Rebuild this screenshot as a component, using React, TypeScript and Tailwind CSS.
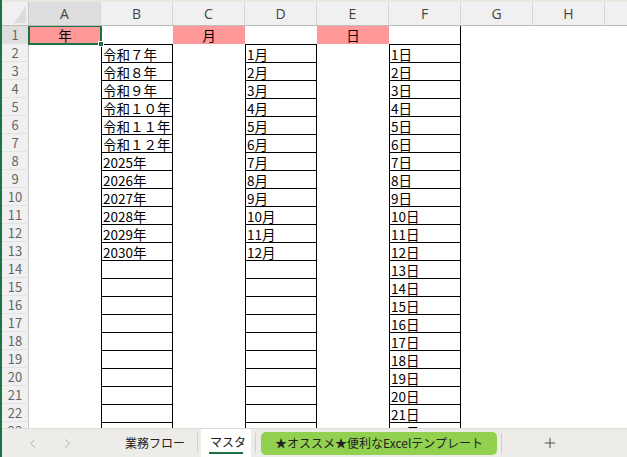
import React from "react";
import { ChevronLeft, ChevronRight, Plus } from "lucide-react";

const years = [
  "令和７年",
  "令和８年",
  "令和９年",
  "令和１０年",
  "令和１１年",
  "令和１２年",
  "2025年",
  "2026年",
  "2027年",
  "2028年",
  "2029年",
  "2030年",
];

const cols = ["A", "B", "C", "D", "E", "F", "G", "H"];
const rows = Array.from({ length: 23 }, (_, i) => i + 1);

const Boxed = ({ text }: { text?: string }) => (
  <div className="w-[72px] shrink-0 h-full border-x border-t border-black flex items-center pl-[1px] leading-[16px] text-black whitespace-nowrap overflow-hidden">
    {text}
  </div>
);

const Empty = () => <div className="w-[72px] shrink-0 h-full" />;

const Header = ({ label, selected }: { label: string; selected?: boolean }) => (
  <div className="w-[72px] shrink-0 h-full relative bg-[#ff9999] flex items-center justify-center leading-[16px] text-black">
    {label}
    {selected && (
      <>
        <div className="absolute -left-px -top-px -right-px -bottom-px border-2 border-[#1e7145]" />
        <div className="absolute -right-[3px] -bottom-[3px] w-[6px] h-[6px] bg-[#1e7145] border border-white z-10" />
      </>
    )}
  </div>
);

const Row = ({ r }: { r: number }) => {
  const year = years[r - 2];
  const month = r >= 2 && r <= 13 ? `${r - 1}月` : undefined;
  return (
    <div className="flex h-[18px] shrink-0">
      <div
        className={`w-[27px] shrink-0 h-full border-r border-b border-r-[#c8c8c8] border-b-[#e2e2e2] flex items-center justify-center leading-[16px] text-[13px] text-[#666] ${
          r === 1 ? "bg-[#dedede]" : "bg-[#f0f0f0]"
        }`}
      >
        {r}
      </div>
      {r === 1 ? (
        <>
          <Header label="年" selected />
          <Empty />
          <Header label="月" />
          <Empty />
          <Header label="日" />
          <div className="w-[72px] shrink-0 h-full border-r border-black" />
        </>
      ) : (
        <>
          <Empty />
          <Boxed text={year} />
          <Empty />
          <Boxed text={month} />
          <Empty />
          <Boxed text={`${r - 1}日`} />
        </>
      )}
    </div>
  );
};

export default function App() {
  return (
    <div className="w-[627px] h-[457px] flex flex-col bg-white border-l-2 border-[#1e7145] overflow-hidden font-['Noto_Sans_CJK_JP',sans-serif] text-[13.5px]">
      {/* top strip */}
      <div className="h-[2px] shrink-0 bg-[#ebe6df]" />

      {/* column headers */}
      <div className="flex h-[24px] shrink-0 bg-[#f0f0f0] border-b border-[#bdbdbd] text-[14px] text-[#444] font-['Open_Sans',sans-serif]">
        <div className="w-[27px] shrink-0 h-full border-r border-[#c8c8c8] flex items-end justify-end pr-[2px] pb-[2px]">
          <svg width="12" height="17" viewBox="0 0 12 17">
            <polygon points="12,0 12,17 0,17" fill="#dcdcdc" />
          </svg>
        </div>
        {cols.map((c) => (
          <div
            key={c}
            className={`w-[72px] shrink-0 h-full border-r border-[#d6d6d6] flex items-center justify-center ${
              c === "A" ? "bg-[#dedede]" : ""
            }`}
          >
            {c}
          </div>
        ))}
        <div className="flex-1" />
      </div>

      {/* sheet */}
      <div className="flex-1 flex flex-col overflow-hidden">
        {rows.map((r) => (
          <Row key={r} r={r} />
        ))}
      </div>

      {/* sheet tabs */}
      <div className="h-[29px] shrink-0 flex items-center bg-[#eeece9] border-t border-[#dedbd6] text-[12px] text-[#222]">
        <div className="w-[111px] shrink-0 flex items-center pl-[23px] gap-[20px] text-[#a8a8a8]">
          <ChevronLeft size={15} strokeWidth={1.5} />
          <ChevronRight size={15} strokeWidth={1.5} />
        </div>
        <div className="px-[12px] h-full flex items-center">業務フロー</div>
        <div className="w-px h-[20px] bg-[#cfcfcf]" />
        <div className="ml-[3px] w-[50px] h-full bg-white flex flex-col items-center justify-center relative">
          <span className="pl-[4px]">マスタ</span>
          <div className="w-[34px] h-[2px] bg-[#1e7145] mt-[1px]" />
        </div>
        <div className="ml-[4px] w-px h-[20px] bg-[#cfcfcf]" />
        <div className="ml-[5px] w-[236px] h-[23px] rounded-[5px] bg-[#92d050] flex items-center justify-center">
          ★オススメ★便利なExcelテンプレート
        </div>
        <div className="ml-[4px] w-px h-[20px] bg-[#cfcfcf]" />
        <div className="w-[96px] flex items-center justify-center text-[#444]">
          <Plus size={16} strokeWidth={1.4} />
        </div>
      </div>
    </div>
  );
}
